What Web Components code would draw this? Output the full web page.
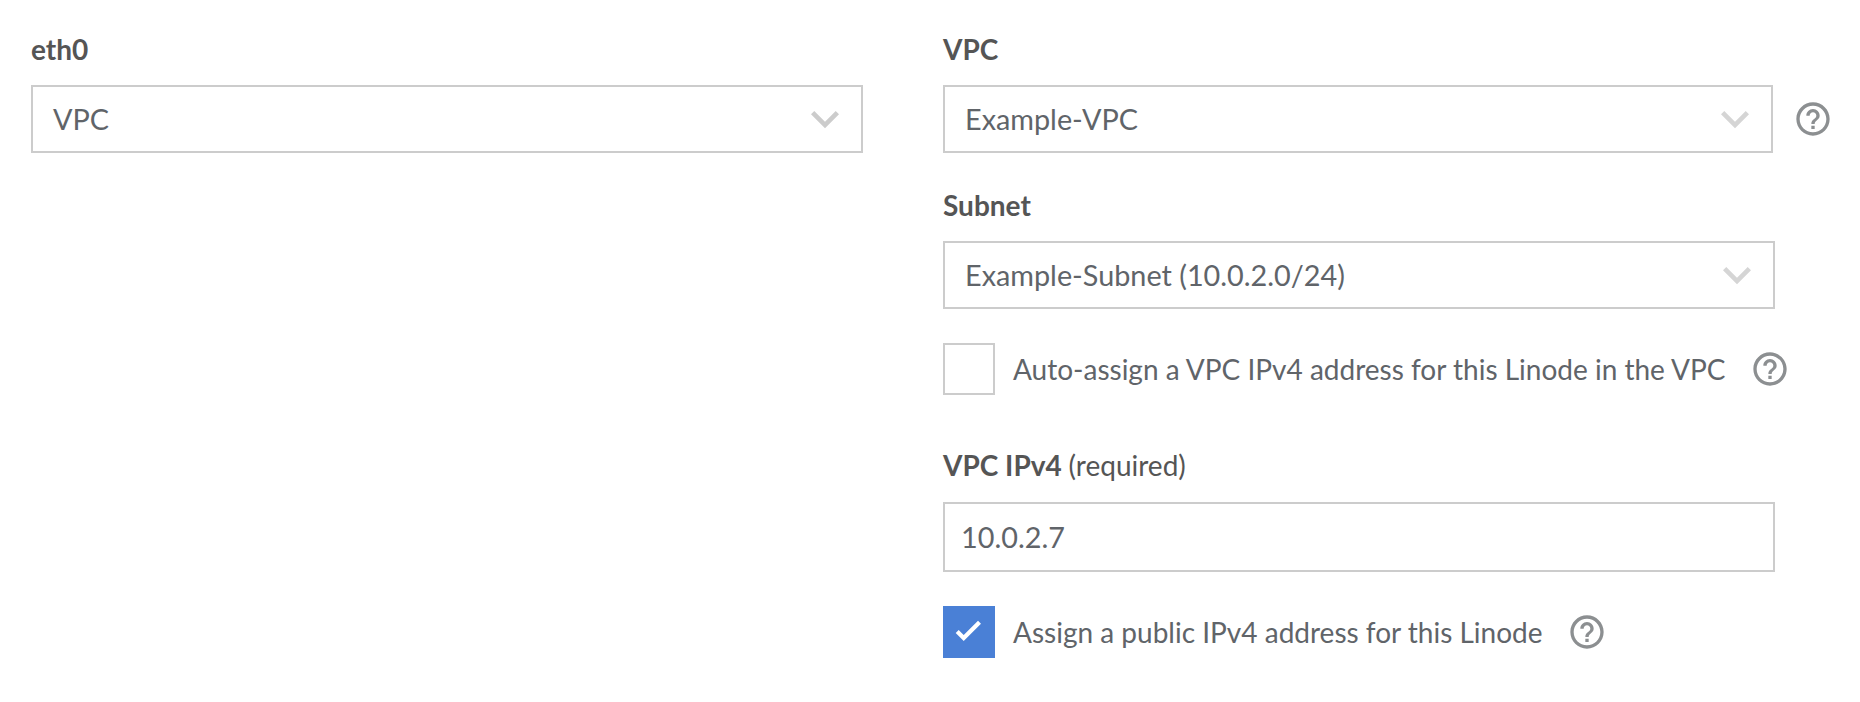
<!DOCTYPE html>
<html lang="en">
<head>
<meta charset="utf-8">
<title>Network interface</title>
<style>
  body { margin: 0; background: #fff; font-family: Lato, "Liberation Sans", sans-serif; font-size: 28px; color: #606469; }
</style>
</head>
<body>
<interface-form></interface-form>
<script>
const define = (name, html) => customElements.define(name, class extends HTMLElement {
  constructor() {
    super();
    const t = document.createElement('template');
    t.innerHTML = '<style>*{box-sizing:border-box}</style>' + html;
    this.attachShadow({ mode: 'open' }).append(t.content.cloneNode(true));
  }
});

define('help-tip', `
  <style>:host{display:block;width:40px;height:40px;flex:none} svg{display:block;width:40px;height:40px;fill:#8c8f91}</style>
  <svg viewBox="0 0 24 24"><path d="M11 18h2v-2h-2v2zm1-16C6.48 2 2 6.48 2 12s4.48 10 10 10 10-4.48 10-10S17.52 2 12 2zm0 18c-4.41 0-8-3.59-8-8s3.59-8 8-8 8 3.59 8 8-3.59 8-8 8zm0-14c-2.21 0-4 1.79-4 4h2c0-1.1.9-2 2-2s2 .9 2 2c0 2-3 1.75-3 5h2c0-2.25 3-2.5 3-5 0-2.21-1.79-4-4-4z"/></svg>`);

define('field-label', `
  <style>:host{display:block;height:34px;line-height:34px;font-weight:700;color:#555}
  ::slotted(span){font-weight:400}</style><slot></slot>`);

define('select-box', `
  <style>
    :host{display:flex;box-sizing:border-box;align-items:center;justify-content:space-between;height:68px;width:832px;
      border:2px solid #ccc;padding:0 8px 0 20px;font-size:28.8px;line-height:34px;background:#fff}
    svg{width:56px;height:56px;fill:var(--chevron,#ccc);display:block}
  </style>
  <span><slot></slot></span>
  <svg viewBox="0 0 24 24"><path d="M7.41 8.59 12 13.17l4.59-4.58L18 10l-6 6-6-6z"/></svg>`);

define('text-box', `
  <style>:host{display:flex;box-sizing:border-box;align-items:center;height:70px;width:832px;border:2px solid #ccc;
    padding:0 16px;font-size:28.8px;line-height:34px;background:#fff}</style>
  <span><slot></slot></span>`);

define('check-row', `
  <style>
    :host{display:flex;align-items:center;height:52px}
    .box{width:52px;height:52px;border:2px solid #ccc;flex:none;margin-right:18px}
    svg{display:none;width:48px;height:48px}
    :host([checked]) .box{background:#4a80d6;border-color:#4a80d6}
    :host([checked]) svg{display:block}
    .text{line-height:34px;margin-right:24px;white-space:nowrap}
  </style>
  <div class="box"><svg viewBox="2 2 48 48"><path fill="none" stroke="#fff" stroke-width="4.2" d="M14.2 25.5 20.7 32 36.5 16.2"/></svg></div>
  <span class="text"><slot></slot></span><help-tip></help-tip>`);

define('interface-form', `
  <style>
    :host{display:grid;grid-template-columns:832px 1fr;column-gap:80px;padding:32px 0 0 31px;height:702px;box-sizing:border-box}
    .col{display:flex;flex-direction:column;align-items:flex-start}
    field-label{margin-bottom:19px}
    .row{display:flex;align-items:center;gap:20px;margin-bottom:35px}
    .row select-box{width:830px}
    .light{--chevron:#d5d5d5}
    .subnet{margin-bottom:34px}
    .auto{margin-bottom:53px}
    .ip{margin-bottom:20px}
    text-box{margin-bottom:34px}
  </style>
  <div class="col"><field-label>eth0</field-label><select-box>VPC</select-box></div>
  <div class="col light">
    <field-label>VPC</field-label>
    <div class="row"><select-box>Example-VPC</select-box><help-tip></help-tip></div>
    <field-label>Subnet</field-label>
    <select-box class="subnet">Example-Subnet (10.0.2.0/24)</select-box>
    <check-row class="auto">Auto-assign a VPC IPv4 address for this Linode in the VPC</check-row>
    <field-label class="ip">VPC IPv4 <span>(required)</span></field-label>
    <text-box>10.0.2.7</text-box>
    <check-row checked>Assign a public IPv4 address for this Linode</check-row>
  </div>`);
</script>
</body>
</html>
